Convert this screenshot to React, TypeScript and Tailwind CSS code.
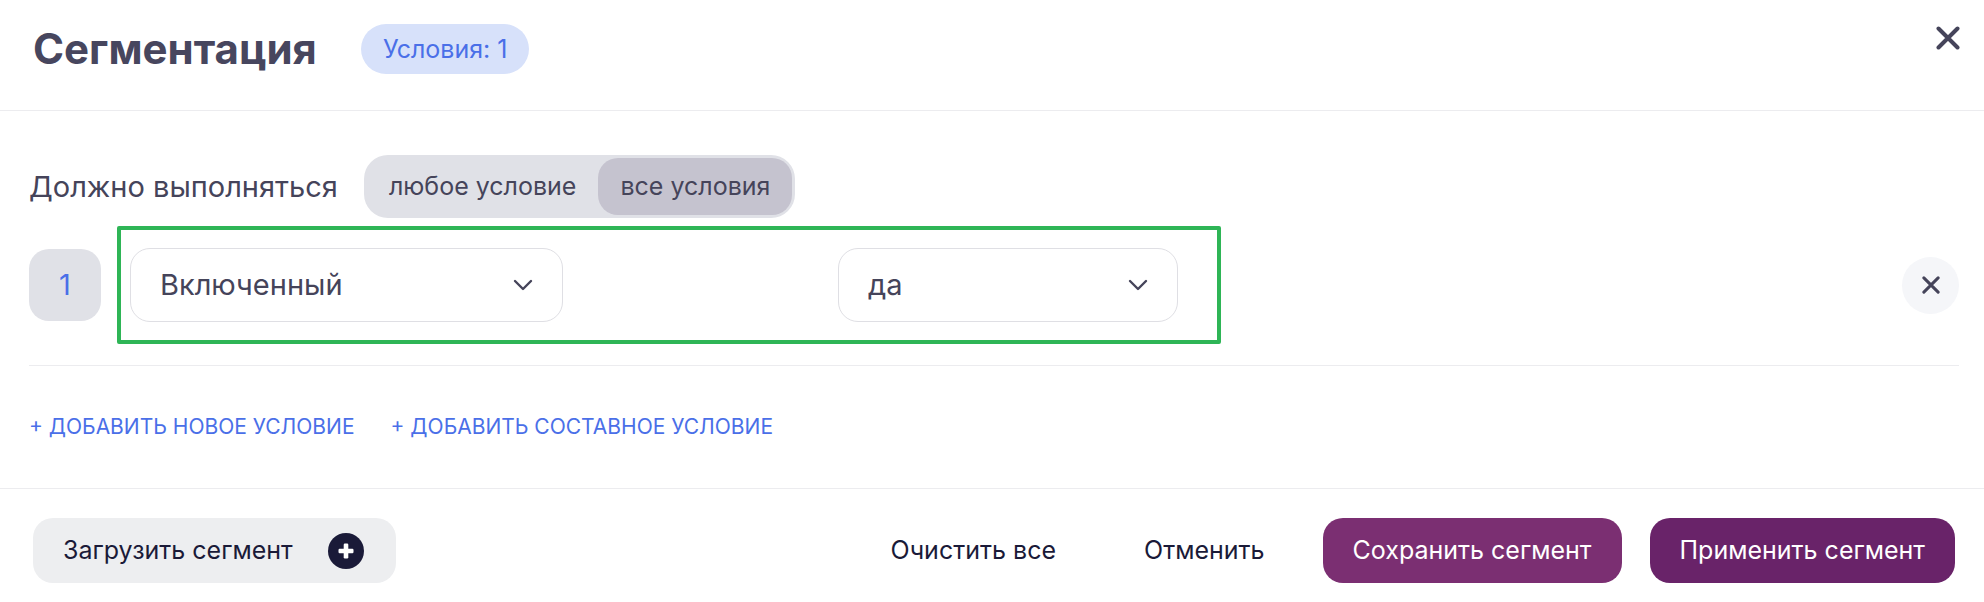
import { useState } from "react";

type IconProps = { className?: string };

function CrossIcon({ className }: IconProps) {
  return (
    <svg viewBox="0 0 24 24" fill="none" stroke="currentColor" strokeLinecap="round" className={className} aria-hidden="true">
      <path d="M2.5 2.5 21.5 21.5M21.5 2.5 2.5 21.5" strokeWidth="4" />
    </svg>
  );
}

function ChevronIcon({ className }: IconProps) {
  return (
    <svg viewBox="0 0 20 12" fill="none" stroke="currentColor" strokeWidth="2.4" strokeLinecap="round" strokeLinejoin="round" className={className} aria-hidden="true">
      <path d="M2 2 10 10 18 2" />
    </svg>
  );
}

function PlusCircleIcon({ className }: IconProps) {
  return (
    <svg viewBox="0 0 36 36" className={className} aria-hidden="true">
      <circle cx="18" cy="18" r="18" fill="#1a1a38" />
      <rect x="10.5" y="15.7" width="15" height="4.6" rx="1.2" fill="#fff" />
      <rect x="15.7" y="10.5" width="4.6" height="15" rx="1.2" fill="#fff" />
    </svg>
  );
}

type SelectProps = { label: string; options: string[]; className: string };

function Select({ label, options, className }: SelectProps) {
  return (
    <div className={`relative flex items-center ${className}`}>
      <select
        aria-label={label}
        className="h-[74px] w-full appearance-none rounded-[20px] border border-[#dfdfe4] bg-white pr-16 pl-[29px] text-[29px] text-[#45445a]"
      >
        {options.map((option) => (
          <option key={option}>{option}</option>
        ))}
      </select>
      <ChevronIcon className="pointer-events-none absolute right-[30px] h-3 w-5 text-[#45445a]" />
    </div>
  );
}

export default function App() {
  const [mode, setMode] = useState("all");
  const modes = [
    { id: "any", title: "любое условие" },
    { id: "all", title: "все условия" },
  ];

  return (
    <main className="bg-white font-['Inter',sans-serif] text-[#45445a]">
      <header className="flex items-start justify-between border-b border-[#ececef] pt-6 pr-6 pb-9 pl-[33px]">
        <div className="flex items-center gap-11">
          <h1 className="text-[42px] leading-[50px] font-bold text-[#47465e]">Сегментация</h1>
          <span className="rounded-full bg-[#d7e1fa] px-[22px] text-[25px] leading-[50px] text-[#4a6fe8]">Условия: 1</span>
        </div>
        <button type="button" aria-label="Закрыть" className="mt-[2px]">
          <CrossIcon className="size-6" />
        </button>
      </header>

      <section className="pt-11 pr-[25px] pl-[29px]">
        <div className="flex items-center gap-[26px]">
          <span id="mode-label" className="text-[29px]">Должно выполняться</span>
          <div role="group" aria-labelledby="mode-label" className="flex rounded-3xl bg-[#e0e1e7] p-[3px]">
            {modes.map(({ id, title }) => (
              <button
                key={id}
                type="button"
                aria-pressed={mode === id}
                onClick={() => setMode(id)}
                className={`h-[57px] rounded-[20px] px-[22px] text-[25px] ${mode === id ? "bg-[#c5c3cf]" : ""}`}
              >
                {title}
              </button>
            ))}
          </div>
        </div>

        <div className="mt-2 flex items-center border-b border-[#ececef] pb-[21px]">
          <div className="flex size-[72px] items-center justify-center rounded-[20px] bg-[#e0e1e7] text-[29px] text-[#4a6fe8]">1</div>
          <div className="ml-4 flex items-center rounded-xs border-4 border-[#2eb556] py-[18px] pr-[39px] pl-[9px]">
            <Select label="Поле" options={["Включенный"]} className="w-[433px]" />
            <Select label="Значение" options={["да", "нет"]} className="ml-[275px] w-[340px]" />
          </div>
          <button type="button" aria-label="Удалить условие" className="ml-auto flex size-[57px] items-center justify-center rounded-full bg-[#f5f6f9]">
            <CrossIcon className="size-[18px]" />
          </button>
        </div>

        <div className="flex gap-9 py-11 text-[21px] leading-[34px] text-[#4a6fe8]">
          <button type="button">+ ДОБАВИТЬ НОВОЕ УСЛОВИЕ</button>
          <button type="button">+ ДОБАВИТЬ СОСТАВНОЕ УСЛОВИЕ</button>
        </div>
      </section>

      <footer className="flex items-center border-t border-[#ececef] pt-[29px] pr-[29px] pb-5 pl-[33px] text-[25px] text-[#1a1a38]">
        <button type="button" className="flex h-[65px] items-center gap-[35px] rounded-[20px] bg-[#edeef0] pr-8 pl-[30px]">
          Загрузить сегмент
          <PlusCircleIcon className="size-9" />
        </button>
        <div className="ml-auto flex items-center gap-7">
          <button type="button" className="h-[65px] px-[30px]">Очистить все</button>
          <button type="button" className="h-[65px] px-[30px]">Отменить</button>
          <button type="button" className="h-[65px] rounded-[20px] bg-[#7b2f72] px-[30px] text-white">Сохранить сегмент</button>
          <button type="button" className="h-[65px] rounded-[20px] bg-[#692369] px-[30px] text-white">Применить сегмент</button>
        </div>
      </footer>
    </main>
  );
}
